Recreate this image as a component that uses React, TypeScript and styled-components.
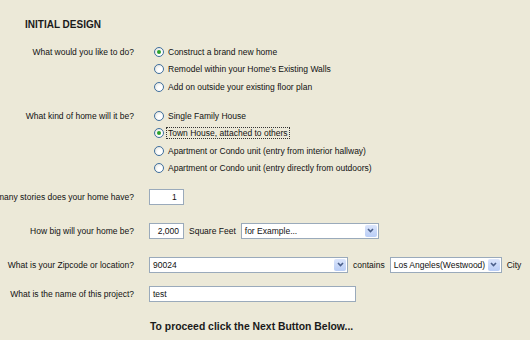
import React from 'react';
import styled, { createGlobalStyle } from 'styled-components';

const GlobalStyle = createGlobalStyle`
  html, body {
    margin: 0;
    padding: 0;
  }
  body {
    background: #ece9d8;
    font-family: 'Liberation Sans', Arial, sans-serif;
    color: #111;
    overflow: hidden;
  }
`;

const Page = styled.div`
  width: 530px;
  height: 340px;
  padding-top: 18px;
  box-sizing: border-box;
`;

const Title = styled.h1`
  margin: 0 0 0 25px;
  font-size: 10px;
  font-weight: bold;
  line-height: 13px;
  color: #1a1a1a;
`;

const Form = styled.div`
  display: flex;
  flex-direction: column;
`;

const Row = styled.div<{ $gap: number }>`
  display: grid;
  grid-template-columns: 134px 1fr;
  column-gap: 15px;
  margin-top: ${(p) => p.$gap}px;
`;

/* right aligned; long questions spill off to the left */
const Label = styled.div<{ $h: number }>`
  display: flex;
  justify-content: flex-end;
  align-items: center;
  height: ${(p) => p.$h}px;
  white-space: nowrap;
  font-size: 8.5px;
`;

const RadioGroup = styled.div`
  display: flex;
  flex-direction: column;
  padding-left: 5px;
`;

const Option = styled.div`
  display: flex;
  align-items: center;
  height: 17.5px;
  gap: 1px;
  font-size: 8.5px;
  white-space: nowrap;
`;

const Circle = styled.span<{ $on?: boolean }>`
  position: relative;
  width: 10px;
  height: 10px;
  box-sizing: border-box;
  border-radius: 50%;
  border: 1px solid #3f6f9e;
  background: radial-gradient(circle at 65% 65%, #ffffff 30%, #dcdcd4 100%);
  flex-shrink: 0;
  margin-right: 1px;

  &::after {
    content: '';
    display: ${(p) => (p.$on ? 'block' : 'none')};
    position: absolute;
    left: 2px;
    top: 2px;
    width: 4px;
    height: 4px;
    border-radius: 50%;
    background: #2aa12a;
  }
`;

const OptionText = styled.span<{ $focus?: boolean }>`
  padding: 0 1px;
  line-height: 10px;
  border: 1px dotted ${(p) => (p.$focus ? '#333' : 'transparent')};
`;

const Controls = styled.div`
  display: flex;
  align-items: center;
  gap: 5px;
  font-size: 8.5px;
  white-space: nowrap;
`;

const TextBox = styled.div<{ $w: number; $align?: string }>`
  width: ${(p) => p.$w}px;
  height: 16px;
  box-sizing: border-box;
  border: 1px solid #9aaabb;
  background: #fff;
  font-size: 8.5px;
  line-height: 14px;
  padding: 0 4px 0 3px;
  text-align: ${(p) => p.$align || 'left'};
`;

const Select = styled.div<{ $w: number }>`
  display: flex;
  align-items: stretch;
  width: ${(p) => p.$w}px;
  height: 16px;
  box-sizing: border-box;
  border: 1px solid #9aaabb;
  background: #fff;
`;

const SelectText = styled.span`
  flex: 1;
  padding-left: 3px;
  font-size: 8.5px;
  line-height: 14px;
  overflow: hidden;
`;

const ArrowButton = styled.span`
  width: 12px;
  margin: 1px;
  border-radius: 2px;
  background: linear-gradient(#dbe5fb, #b9cdf6);
  display: flex;
  align-items: center;
  justify-content: center;
`;

const Footer = styled.p`
  margin: 19px 0 0 150px;
  font-size: 10.4px;
  font-weight: bold;
  line-height: 12px;
  color: #1a1a1a;
`;

const Chevron = () => (
  <svg width="7" height="5" viewBox="0 0 7 5">
    <path d="M1 1 L3.5 3.5 L6 1" fill="none" stroke="#4b5f8a" strokeWidth="1.6" />
  </svg>
);

const Dropdown: React.FC<{ w: number; text: string }> = ({ w, text }) => (
  <Select $w={w}>
    <SelectText>{text}</SelectText>
    <ArrowButton>
      <Chevron />
    </ArrowButton>
  </Select>
);

const todo = [
  'Construct a brand new home',
  "Remodel within your Home's Existing Walls",
  'Add on outside your existing floor plan',
];

const kinds = [
  'Single Family House',
  'Town House, attached to others',
  'Apartment or Condo unit (entry from interior hallway)',
  'Apartment or Condo unit (entry directly from outdoors)',
];

const App: React.FC = () => {
  return (
    <Page>
      <GlobalStyle />
      <Title>INITIAL DESIGN</Title>
      <Form>
        <Row $gap={12}>
          <Label $h={17.5}>What would you like to do?</Label>
          <RadioGroup>
            {todo.map((t, i) => (
              <Option key={t}>
                <Circle $on={i === 0} />
                <OptionText>{t}</OptionText>
              </Option>
            ))}
          </RadioGroup>
        </Row>
        <Row $gap={11.5}>
          <Label $h={17.5}>What kind of home will it be?</Label>
          <RadioGroup>
            {kinds.map((t, i) => (
              <Option key={t}>
                <Circle $on={i === 1} />
                <OptionText $focus={i === 1}>{t}</OptionText>
              </Option>
            ))}
          </RadioGroup>
        </Row>
        <Row $gap={12}>
          <Label $h={16}>How many stories does your home have?</Label>
          <Controls>
            <TextBox $w={35} $align="right">
              1&nbsp;
            </TextBox>
          </Controls>
        </Row>
        <Row $gap={17.5}>
          <Label $h={16}>How big will your home be?</Label>
          <Controls>
            <TextBox $w={35} $align="right">
              2,000
            </TextBox>
            <span>Square Feet</span>
            <Dropdown w={138} text="for Example..." />
          </Controls>
        </Row>
        <Row $gap={18}>
          <Label $h={16}>What is your Zipcode or location?</Label>
          <Controls>
            <Dropdown w={199} text="90024" />
            <span>contains</span>
            <Dropdown w={112} text="Los Angeles(Westwood)" />
            <span>City</span>
          </Controls>
        </Row>
        <Row $gap={13}>
          <Label $h={16}>What is the name of this project?</Label>
          <Controls>
            <TextBox $w={207}>test</TextBox>
          </Controls>
        </Row>
      </Form>
      <Footer>To proceed click the Next Button Below...</Footer>
    </Page>
  );
};

export default App;
